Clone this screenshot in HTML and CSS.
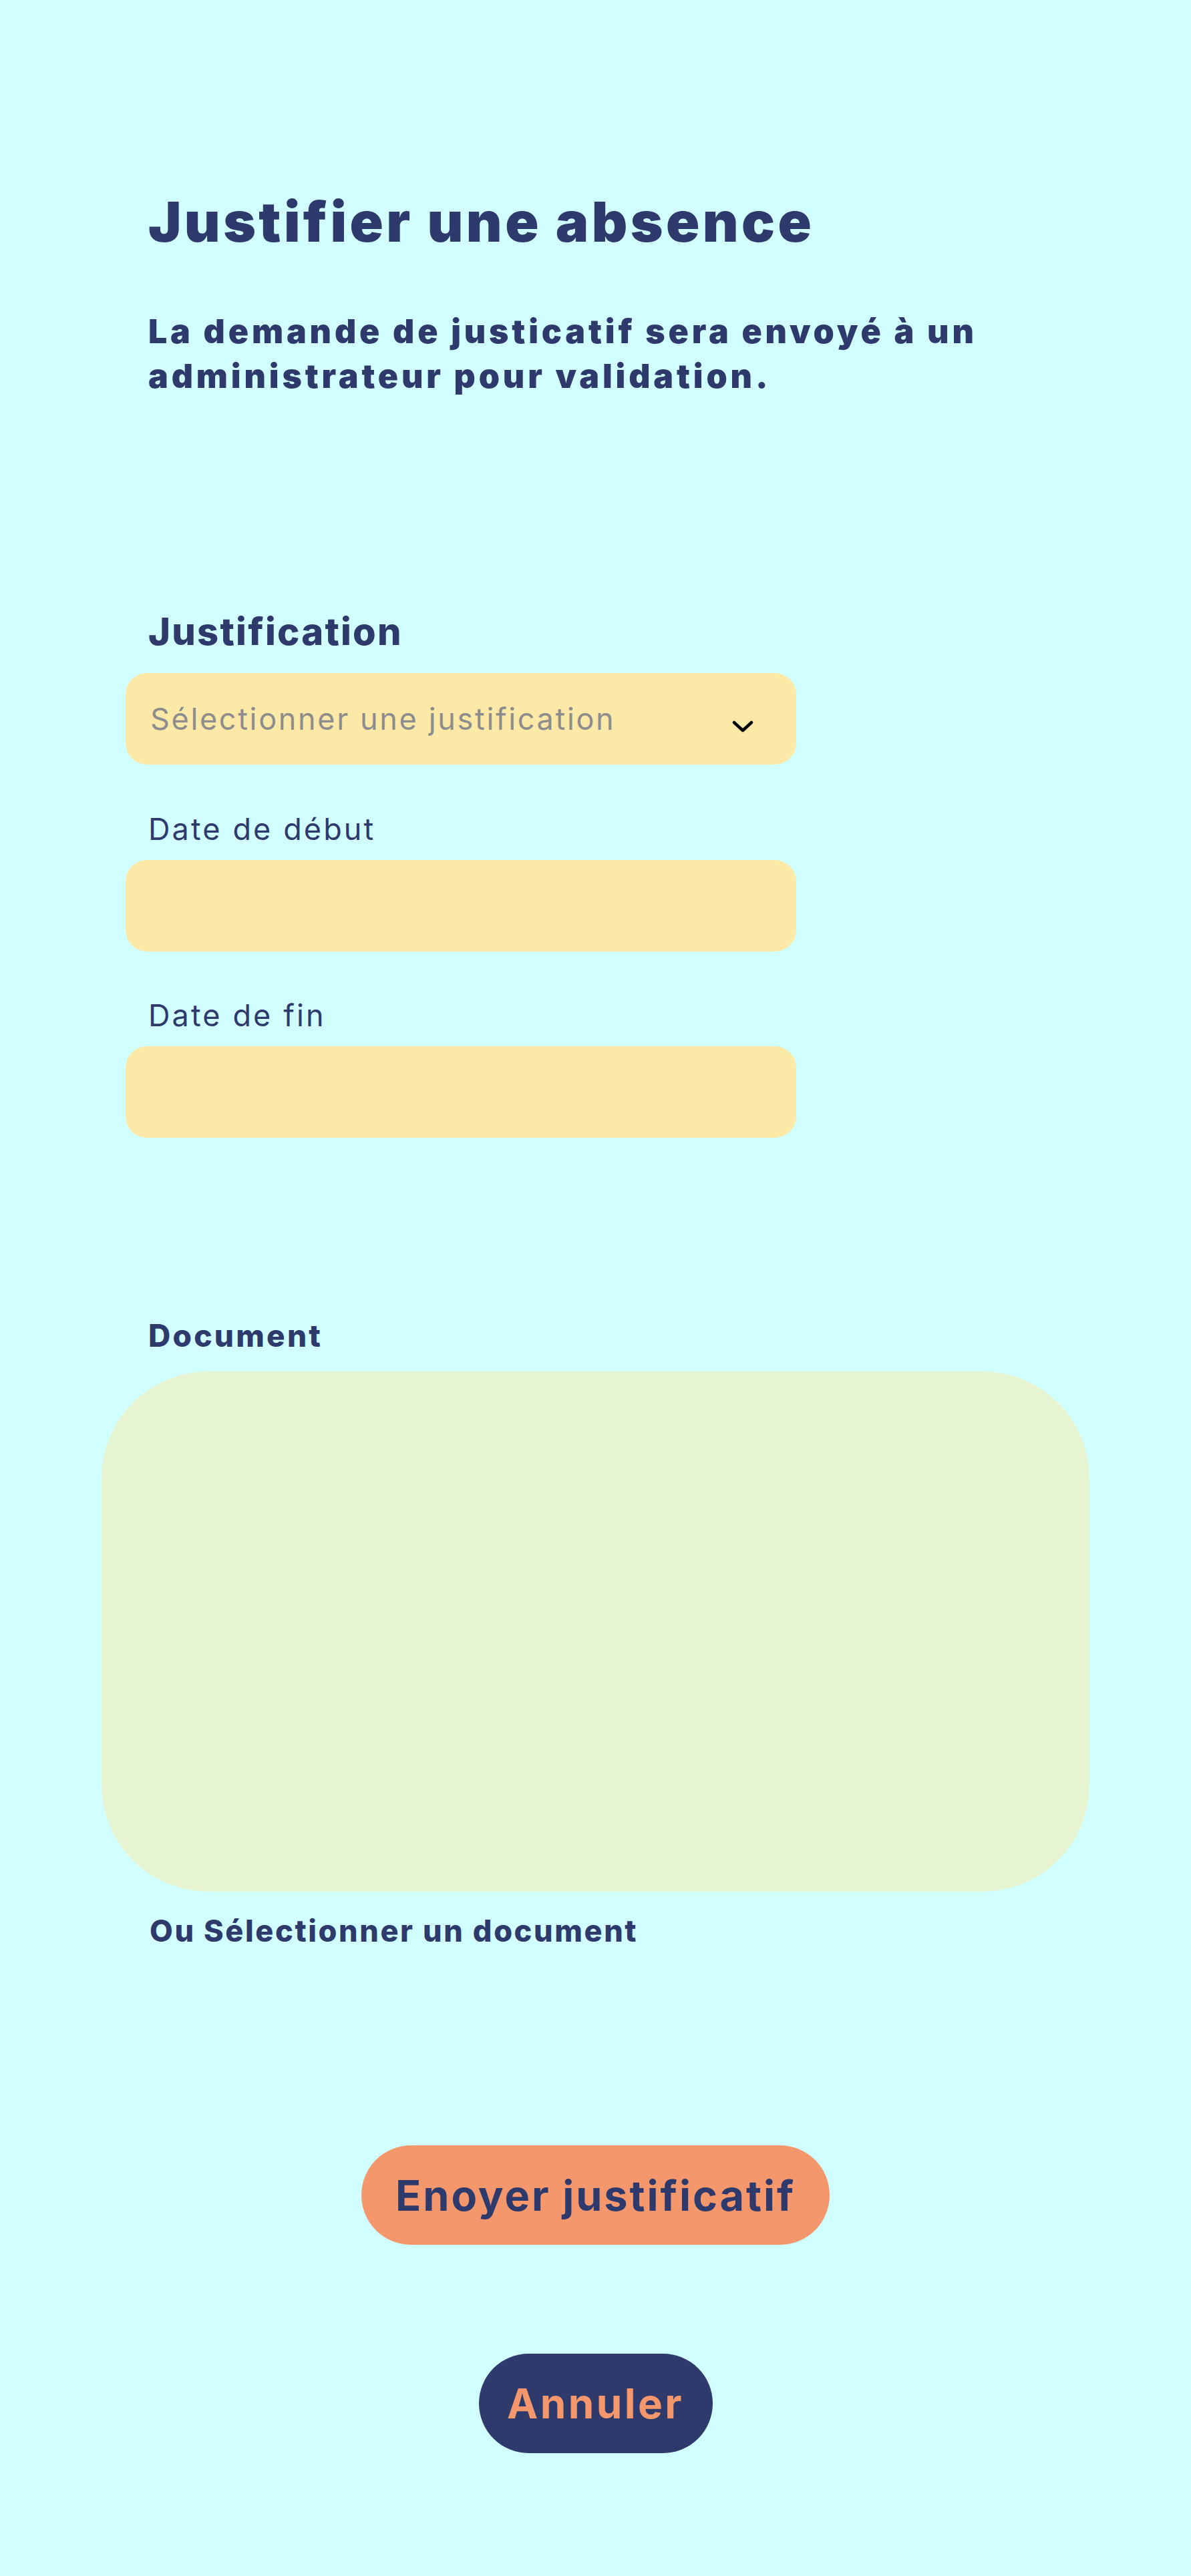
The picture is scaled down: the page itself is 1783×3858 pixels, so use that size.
FILE: index.html
```html
<!DOCTYPE html>
<html lang="fr">
<head>
<meta charset="utf-8">
<title>Justifier une absence</title>
<link rel="stylesheet" href="styles.css">
</head>
<body>
<main class="page">
  <header class="intro">
    <h1 class="title">Justifier une absence</h1>
    <p class="subtitle">La demande de justicatif sera envoyé à un administrateur pour validation.</p>
  </header>
  <form class="form">
    <section class="fields">
      <div class="label label--strong">Justification</div>
      <div class="select">
        <span class="placeholder">Sélectionner une justification</span>
        <svg class="chevron" width="32" height="18" viewBox="0 0 32 18" aria-hidden="true">
          <path d="M3 3 L16 15 L29 3" fill="none" stroke="#000" stroke-width="4.5" stroke-linecap="round" stroke-linejoin="round"/>
        </svg>
      </div>
      <div class="label label--first">Date de début</div>
      <div class="input"></div>
      <div class="label">Date de fin</div>
      <div class="input"></div>
    </section>
    <section class="document">
      <div class="doc-label">Document</div>
      <div class="dropzone"></div>
      <div class="doc-link">Ou Sélectionner un document</div>
    </section>
    <div class="actions">
      <button type="button" class="btn btn--primary">Enoyer justificatif</button>
      <button type="button" class="btn btn--secondary">Annuler</button>
    </div>
  </form>
</main>
</body>
</html>
```
FILE: styles.css
```css
* { box-sizing: border-box; }

html, body {
  margin: 0;
  padding: 0;
  background: #d1fefe;
}

body {
  font-family: Inter, "Noto Sans", "Liberation Sans", sans-serif;
  color: #2f3a6c;
}

.page {
  width: 1783px;
  min-height: 3858px;
  padding: 282px 0 184px;
  display: flex;
  flex-direction: column;
}

.intro {
  padding-left: 222px;
}

.title {
  margin: 0;
  font-size: 83px;
  line-height: 100px;
  font-weight: 900;
  letter-spacing: 0.053em;
}

.subtitle {
  margin: 81px 0 0;
  max-width: 1400px;
  font-size: 50px;
  line-height: 67px;
  font-weight: 900;
  letter-spacing: 0.097em;
}

.form {
  display: flex;
  flex-direction: column;
}

.fields {
  display: flex;
  flex-direction: column;
  padding-left: 188px;
  margin-top: 316px;
}

.label {
  padding-left: 34px;
  font-size: 45px;
  line-height: 54px;
  font-weight: 400;
  letter-spacing: 0.069em;
  margin: 69px 0 19px;
}

.label--first {
  margin-top: 70px;
}

.label--strong {
  margin: 0 0 28px;
  font-size: 56px;
  line-height: 67px;
  font-weight: 800;
  letter-spacing: 0.04em;
}

.select,
.input {
  width: 1004px;
  height: 137px;
  border-radius: 32px;
  background: #fce8a7;
}

.select {
  display: flex;
  align-items: center;
  padding: 0 64px 0 37px;
}

.placeholder {
  font-size: 45px;
  line-height: 54px;
  color: #8d8d8d;
  letter-spacing: 0.059em;
}

.chevron {
  margin-left: auto;
  margin-top: 23px;
  display: block;
}

.document {
  display: flex;
  flex-direction: column;
  margin-top: 269px;
}

.doc-label {
  padding-left: 222px;
  font-size: 46px;
  line-height: 55px;
  font-weight: 800;
  letter-spacing: 0.07em;
}

.dropzone {
  margin: 26px auto 0;
  width: 1479px;
  height: 779px;
  border-radius: 160px;
  background: #e7f4d1;
}

.doc-link {
  margin-top: 32px;
  padding-left: 224px;
  font-size: 45px;
  line-height: 54px;
  font-weight: 800;
  letter-spacing: 0.058em;
}

.actions {
  display: flex;
  flex-direction: column;
  align-items: center;
  margin-top: 294px;
  gap: 163px;
}

.btn {
  border: none;
  margin: 0;
  padding: 0;
  height: 149px;
  border-radius: 75px;
  font-family: inherit;
  font-weight: 700;
  display: flex;
  align-items: center;
  justify-content: center;
  cursor: pointer;
}

.btn--primary {
  width: 701px;
  background: #f4976d;
  color: #2f3a6c;
  font-size: 63px;
  line-height: 76px;
  letter-spacing: 0.046em;
}

.btn--secondary {
  width: 350px;
  background: #2f3a6c;
  color: #f4976d;
  font-size: 62px;
  line-height: 76px;
  letter-spacing: 0.055em;
}
```
